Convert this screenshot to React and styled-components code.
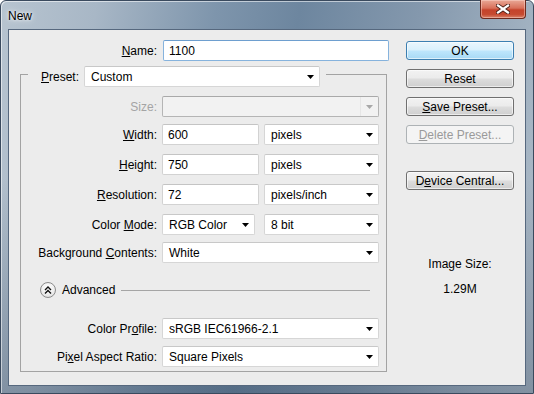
import React from "react"
import styled, { createGlobalStyle } from "styled-components"

const GlobalStyle = createGlobalStyle`
  html, body {
    margin: 0;
    padding: 0;
    background: #fff;
  }
  body {
    font-family: "Liberation Sans", Arial, sans-serif;
    font-size: 12px;
    color: #000;
  }
`

const Window = styled.div`
  width: 534px;
  height: 394px;
  box-sizing: border-box;
  display: flex;
  flex-direction: column;
  border: 1px solid #3a4a5e;
  border-radius: 6px 6px 0 0;
  padding: 0 7px 7px;
  background: linear-gradient(180deg, rgba(255, 255, 255, 0) 45%, rgba(30, 50, 75, 0.3) 100%),
    linear-gradient(
      100deg,
      #b7c4d0 0%,
      #a8b7c6 16%,
      #7e95ac 36%,
      #6d869f 50%,
      #8498ad 70%,
      #a3b3c2 90%,
      #aebbc8 100%
    );
  box-shadow: inset 1px 1px 0 rgba(255, 255, 255, 0.55);
`

const TitleBar = styled.div`
  height: 28px;
  display: flex;
  align-items: flex-start;
  justify-content: space-between;
`

const Title = styled.div`
  padding-top: 8px;
  font-size: 12px;
  color: #000;
  text-shadow: 0 0 6px rgba(255, 255, 255, 0.9), 0 0 3px rgba(255, 255, 255, 0.9);
`

const CloseButton = styled.div`
  width: 46px;
  height: 19px;
  margin-top: -1px;
  box-sizing: border-box;
  display: flex;
  align-items: center;
  justify-content: center;
  border: 1px solid #6e2a1e;
  border-top: none;
  border-radius: 0 0 4px 4px;
  background: linear-gradient(180deg, #e9a896 0%, #d8705a 45%, #c5432b 55%, #c64a30 80%, #d9836a 100%);
  box-shadow: inset 0 0 0 1px rgba(255, 220, 210, 0.45);
`

const Client = styled.div`
  flex: 1;
  display: flex;
  border: 1px solid #56687e;
  background: #ececec;
`

const LeftColumn = styled.div`
  width: 383px;
  padding-top: 10px;
`

const RightColumn = styled.div`
  width: 108px;
  margin-left: 14px;
  padding-top: 11px;
  display: flex;
  flex-direction: column;
  align-items: stretch;
`

const Row = styled.div`
  display: flex;
  align-items: center;
  gap: ${(p) => p.$gap || 5}px;
  margin-top: ${(p) => p.$top || 0}px;
`

const Label = styled.div`
  width: ${(p) => p.$w || 136}px;
  text-align: right;
  white-space: nowrap;
  color: ${(p) => (p.$disabled ? "#a4a4a4" : "#000")};
`

const U = styled.span`
  text-decoration: underline;
`

const TextBox = styled.div`
  width: ${(p) => p.$w}px;
  height: 21px;
  box-sizing: border-box;
  display: flex;
  align-items: center;
  padding-left: 5px;
  background: #fff;
  border: 1px solid ${(p) => (p.$focus ? "#86b3dd" : "#d2d2d2")};
  border-top-color: ${(p) => (p.$focus ? "#6e9fcf" : "#c4c4c4")};
  border-radius: 2px;
`

const Combo = styled.div`
  width: ${(p) => p.$w}px;
  height: 21px;
  margin-left: ${(p) => p.$ml || 0}px;
  box-sizing: border-box;
  display: flex;
  align-items: center;
  justify-content: space-between;
  padding-left: 6px;
  background: ${(p) => (p.$disabled ? "#f2f2f2" : "#fff")};
  border: 1px solid ${(p) => (p.$disabled ? "#b5b5b5" : "#d6d6d6")};
  border-top-color: ${(p) => (p.$disabled ? "#a9a9a9" : "#c8c8c8")};
  border-radius: 2px;
  white-space: nowrap;
`

const ArrowBox = styled.div`
  width: 17px;
  height: 100%;
  display: flex;
  align-items: center;
  justify-content: center;
  border-left: 1px solid ${(p) => (p.$disabled ? "#e6e6e6" : "transparent")};
`

const GroupBox = styled.fieldset`
  margin: 1px 0 0 11px;
  width: 367px;
  box-sizing: border-box;
  padding: 0 0 4px 0;
  border: 1px solid #a3a3a3;
  min-width: 0;
`

const Legend = styled.legend`
  margin-left: 7px;
  padding: 4px 6px 0 13px;
`

const LegendInner = styled.div`
  display: flex;
  align-items: center;
  gap: 5px;
`

const AdvancedRow = styled.div`
  display: flex;
  align-items: center;
  height: 18px;
  margin-top: 18px;
  padding-left: 19px;
  gap: 6px;
`

const RoundToggle = styled.div`
  width: 16px;
  height: 16px;
  box-sizing: border-box;
  border-radius: 50%;
  border: 1px solid #8c8c8c;
  background: radial-gradient(circle at 50% 35%, #ffffff 0%, #f1f1f1 50%, #d6d6d6 100%);
  display: flex;
  align-items: center;
  justify-content: center;
`

const Rule = styled.div`
  flex: 1;
  height: 1px;
  margin: 0 16px 0 0;
  background: #a5a5a5;
`

const Button = styled.div`
  height: 19px;
  box-sizing: border-box;
  margin-top: ${(p) => p.$top || 0}px;
  display: flex;
  align-items: center;
  justify-content: center;
  border-radius: 3px;
  border: 1px solid ${(p) => (p.$default ? "#3c7fb1" : p.$disabled ? "#adb2b5" : "#707070")};
  color: ${(p) => (p.$disabled ? "#9a9a9a" : "#000")};
  background: ${(p) =>
    p.$default
      ? "linear-gradient(180deg, #eaf6fd 0%, #d9f0fc 48%, #bee6fd 52%, #a7d9f5 100%)"
      : p.$disabled
      ? "#f4f4f4"
      : "linear-gradient(180deg, #f2f2f2 0%, #ebebeb 48%, #dddddd 52%, #cfcfcf 100%)"};
  box-shadow: ${(p) => (p.$disabled ? "none" : "inset 0 0 0 1px rgba(255, 255, 255, 0.6)")};
  white-space: nowrap;
`

const InfoText = styled.div`
  text-align: center;
  margin-top: ${(p) => p.$top || 0}px;
  line-height: 14px;
`

const Arrow = ({ disabled }) => (
  <svg width="7" height="4" viewBox="0 0 7 4">
    <path d="M0 0 H7 L3.5 4 Z" fill={disabled ? "#a8a8a8" : "#000"} />
  </svg>
)

const Select = ({ w, ml, children, disabled }) => (
  <Combo $w={w} $ml={ml} $disabled={disabled}>
    <span>{children}</span>
    <ArrowBox $disabled={disabled}>
      <Arrow disabled={disabled} />
    </ArrowBox>
  </Combo>
)

const CloseGlyph = () => (
  <svg width="14" height="10" viewBox="0 0 14 10">
    <path d="M2 1.5 L12 8.5 M12 1.5 L2 8.5" stroke="#4a2018" strokeWidth="4" strokeLinecap="square" />
    <path d="M2 1.5 L12 8.5 M12 1.5 L2 8.5" stroke="#fff" strokeWidth="2.2" strokeLinecap="square" />
  </svg>
)

const ChevronsUp = () => (
  <svg width="8" height="8" viewBox="0 0 8 8">
    <path d="M1 4 L4 1 L7 4 M1 7.5 L4 4.5 L7 7.5" stroke="#111" strokeWidth="1.4" fill="none" />
  </svg>
)

const App = () => {
  return (
    <>
      <GlobalStyle />
      <Window>
        <TitleBar>
          <Title>New</Title>
          <CloseButton>
            <CloseGlyph />
          </CloseButton>
        </TitleBar>
        <Client>
          <LeftColumn>
            <Row $gap={6}>
              <Label $w={148}>
                <U>N</U>ame:
              </Label>
              <TextBox $w={226} $focus>
                1100
              </TextBox>
            </Row>

            <GroupBox>
              <Legend>
                <LegendInner>
                  <span>
                    <U>P</U>reset:
                  </span>
                  <Select w={236}>Custom</Select>
                </LegendInner>
              </Legend>

              <Row $top={9}>
                <Label $disabled>Size:</Label>
                <Select w={217} disabled></Select>
              </Row>
              <Row $top={7}>
                <Label>
                  <U>W</U>idth:
                </Label>
                <TextBox $w={97}>600</TextBox>
                <Select w={115}>pixels</Select>
              </Row>
              <Row $top={9}>
                <Label>
                  <U>H</U>eight:
                </Label>
                <TextBox $w={97}>750</TextBox>
                <Select w={115}>pixels</Select>
              </Row>
              <Row $top={9}>
                <Label>
                  <U>R</U>esolution:
                </Label>
                <TextBox $w={97}>72</TextBox>
                <Select w={115}>pixels/inch</Select>
              </Row>
              <Row $top={9}>
                <Label>
                  Color <U>M</U>ode:
                </Label>
                <Select w={93}>RGB Color</Select>
                <Select w={115} ml={4}>
                  8 bit
                </Select>
              </Row>
              <Row $top={7}>
                <Label>
                  Background <U>C</U>ontents:
                </Label>
                <Select w={217}>White</Select>
              </Row>

              <AdvancedRow>
                <RoundToggle>
                  <ChevronsUp />
                </RoundToggle>
                <span>Advanced</span>
                <Rule />
              </AdvancedRow>

              <Row $top={19}>
                <Label>
                  Color Pr<U>o</U>file:
                </Label>
                <Select w={217}>sRGB IEC61966-2.1</Select>
              </Row>
              <Row $top={7}>
                <Label>
                  Pi<U>x</U>el Aspect Ratio:
                </Label>
                <Select w={217}>Square Pixels</Select>
              </Row>
            </GroupBox>
          </LeftColumn>

          <RightColumn>
            <Button $default>OK</Button>
            <Button $top={9}>Reset</Button>
            <Button $top={9}>
              <U>S</U>ave Preset...
            </Button>
            <Button $top={9} $disabled>
              <U>D</U>elete Preset...
            </Button>
            <Button $top={27}>
              D<U>e</U>vice Central...
            </Button>
            <InfoText $top={67}>Image Size:</InfoText>
            <InfoText $top={11}>1.29M</InfoText>
          </RightColumn>
        </Client>
      </Window>
    </>
  )
}

export default App
